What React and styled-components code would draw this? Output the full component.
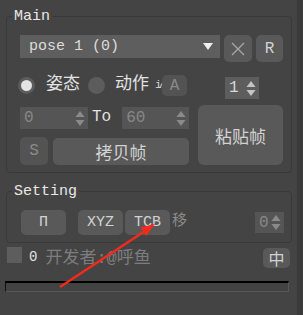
import React from 'react'
import styled, { createGlobalStyle } from 'styled-components'

const GlobalStyle = createGlobalStyle`
    html, body {
        margin: 0;
        padding: 0;
        background: #444444;
    }
    body {
        font-family: "Liberation Mono", "Noto Sans CJK SC", monospace;
        color: #e2e2e2;
    }
`

const Window = styled.div`
    position: relative;
    display: flex;
    width: 303px;
    height: 315px;
    background: #444444;
    overflow: hidden;
`
const Panel = styled.div`
    width: 297px;
    padding: 0 5px 0 6px;
    box-sizing: border-box;
`
const Strip = styled.div`
    width: 6px;
    background: #3a3a3a;
`
const Group = styled.fieldset`
    margin: ${p => p.$top}px 0 0;
    padding: 0;
    border: 1px solid #393939;
    border-radius: 4px;
    min-width: 0;
`
const Legend = styled.legend`
    margin-left: 5px;
    padding: 0 2px;
    font-size: 15px;
    line-height: 17px;
    color: #e8e8e8;
`
const Body = styled.div`
    padding: ${p => p.$pad};
`
const Row = styled.div`
    display: flex;
    align-items: flex-start;
    margin-top: ${p => p.$mt || 0}px;
`
const Dropdown = styled.div`
    display: flex;
    align-items: center;
    justify-content: space-between;
    width: 200px;
    height: 23px;
    padding: 0 7px 0 9px;
    box-sizing: border-box;
    background: #5e5e5e;
    font-size: 15px;
    color: #dcdcdc;
`
const Button = styled.div`
    display: flex;
    align-items: center;
    justify-content: center;
    flex-shrink: 0;
    width: ${p => p.$w}px;
    height: ${p => p.$h}px;
    margin-left: ${p => p.$ml || 0}px;
    margin-top: ${p => p.$mt || 0}px;
    border-radius: ${p => p.$r || 5}px;
    background: ${p => p.$dim ? '#535353' : '#595959'};
    color: ${p => p.$dim ? '#8a8a8a' : '#d2d2d2'};
    font-size: ${p => p.$fs || 15}px;
    box-sizing: border-box;
`
const PushRight = styled(Button)`
    margin-left: auto;
    margin-right: 2px;
`
const Radio = styled.div`
    width: 17px;
    height: 17px;
    margin-top: 2px;
    margin-left: ${p => p.$ml}px;
    border-radius: 50%;
    box-sizing: border-box;
    background: ${p => p.$on ? '#e4e4e4' : '#5c5c5c'};
    border: ${p => p.$on ? '3px solid #5c5c5c' : 'none'};
    flex-shrink: 0;
`
const Label = styled.span`
    margin-left: ${p => p.$ml || 0}px;
    margin-top: ${p => p.$mt || 0}px;
    font-size: ${p => p.$fs || 17}px;
    line-height: 20px;
    color: ${p => p.$dim ? '#8c8c8c' : '#e2e2e2'};
    white-space: nowrap;
`
const Frag = styled.span`
    width: 6px;
    margin-left: 6px;
    margin-top: 2px;
    font-size: 11px;
    line-height: 16px;
    letter-spacing: -3px;
    color: #d8d8d8;
    white-space: nowrap;
`
const Credit = styled.span`
    display: inline-block;
    overflow: hidden;
    width: 106px;
    margin-left: 9px;
    margin-top: 2px;
    line-height: 20px;
    white-space: nowrap;
    span {
        display: inline-block;
        margin-left: -1px;
        font-size: 17px;
        color: #7d7d7d;
    }
`
const Spin = styled.div`
    display: flex;
    align-items: center;
    justify-content: space-between;
    flex-shrink: 0;
    width: ${p => p.$w}px;
    height: ${p => p.$h || 22}px;
    margin-left: ${p => p.$ml || 0}px;
    margin-top: ${p => p.$mt || 0}px;
    padding: 0 3px 0 4px;
    box-sizing: border-box;
    background: ${p => p.$dim ? '#555555' : '#5d5d5d'};
    color: ${p => p.$dim ? '#888888' : '#d8d8d8'};
    font-size: 16px;
`
const Columns = styled.div`
    display: flex;
    gap: 9px;
    margin-top: 6px;
`
const LeftCol = styled.div`
    width: 169px;
`
const Check = styled.div`
    width: 15px;
    height: 16px;
    margin-left: 1px;
    background: #5d5d5d;
    flex-shrink: 0;
`
const Progress = styled.div`
    width: 284px;
    height: 11px;
    margin: 12px 0 0 -1px;
    box-sizing: border-box;
    background: #424242;
    border-top: 2px solid #000;
    border-left: 1px solid #111;
    border-right: 1px solid #575757;
    border-bottom: 1px solid #575757;
`
const Overlay = styled.svg`
    position: absolute;
    left: 0;
    top: 0;
    pointer-events: none;
`

const Arrows = ({ c = '#b8b8b8' }) => (
    <svg width="10" height="17" viewBox="0 0 10 17">
        <path d="M5 1 L9.5 7 L0.5 7 Z" fill={c} />
        <path d="M0.5 10 L9.5 10 L5 16 Z" fill={c} />
    </svg>
)

const Spinner = ({ value, ...rest }) => (
    <Spin {...rest}>
        <span>{value}</span>
        <Arrows c={rest.$dim ? '#8a8a8a' : '#c4c4c4'} />
    </Spin>
)

const App = () => {
    return (
        <Window>
            <GlobalStyle />
            <Panel>
                <Group $top={8}>
                    <Legend>Main</Legend>
                    <Body $pad="10px 8px 7px 13px">
                        <Row>
                            <Dropdown>
                                <span>pose 1 (0)</span>
                                <svg width="10" height="8" viewBox="0 0 10 8">
                                    <path d="M0 0 L10 0 L5 7 Z" fill="#f0f0f0" />
                                </svg>
                            </Dropdown>
                            <Button $w={28} $h={27} $ml={4}>
                                <svg width="14" height="14" viewBox="0 0 14 14">
                                    <path d="M1 1 L13 13 M13 1 L1 13" stroke="#a8a8a8" strokeWidth="1.3" />
                                </svg>
                            </Button>
                            <Button $w={27} $h={27} $ml={4} $fs={16}>R</Button>
                        </Row>
                        <Row $mt={13}>
                            <Radio $on $ml={-2} />
                            <Label $ml={11}>姿态</Label>
                            <Radio $ml={8} />
                            <Label $ml={10}>动作</Label>
                            <Frag>i/</Frag>
                            <Button $w={25} $h={21} $ml={1} $dim $fs={16}>A</Button>
                            <Spinner value="1" $w={34} $mt={2} $ml={38} />
                        </Row>
                        <Columns>
                            <LeftCol>
                                <Row $mt={2}>
                                    <Spinner value="0" $w={68} $dim />
                                    <Label $ml={4} $fs={16}>To</Label>
                                    <Spinner value="60" $w={67} $ml={11} $dim />
                                </Row>
                                <Row $mt={8}>
                                    <Button $w={28} $h={28} $dim $fs={16}>S</Button>
                                    <Button $w={136} $h={27} $ml={5} $mt={1} $fs={17}>拷贝帧</Button>
                                </Row>
                            </LeftCol>
                            <Button $w={85} $h={60} $r={6} $fs={17}>粘贴帧</Button>
                        </Columns>
                    </Body>
                </Group>
                <Group $top={10}>
                    <Legend>Setting</Legend>
                    <Body $pad="10px 8px 7px 14px">
                        <Row>
                            <Button $w={45} $h={25} $fs={15}>Π</Button>
                            <Button $w={45} $h={25} $ml={12} $fs={15}>XYZ</Button>
                            <Button $w={45} $h={25} $ml={2} $fs={15}>TCB</Button>
                            <Label $ml={2} $fs={15} $dim $mt={2}>移</Label>
                            <Spinner value="0" $w={29} $h={21} $mt={2} $ml={68} $dim />
                        </Row>
                    </Body>
                </Group>
                <Row $mt={4}>
                    <Check />
                    <Label $ml={7} $fs={14} $mt={0}>0</Label>
                    <Credit>
                        <span>开发者:@呼鱼</span>
                    </Credit>
                    <PushRight $w={27} $h={20} $mt={1} $fs={16}>中</PushRight>
                </Row>
                <Progress />
            </Panel>
            <Strip />
            <Overlay width="303" height="315" viewBox="0 0 303 315">
                <line x1="60" y1="287" x2="145" y2="231" stroke="#f42a1c" strokeWidth="2.4" />
                <polygon points="155,224 146.1,235.9 140.5,227.5" fill="#f42a1c" />
            </Overlay>
        </Window>
    )
}

export default App
